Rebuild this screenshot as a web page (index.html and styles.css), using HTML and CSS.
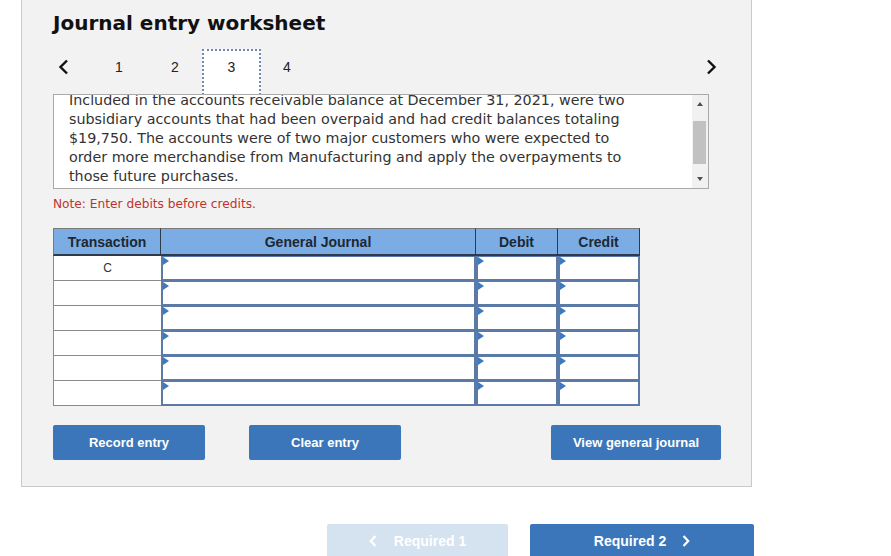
FILE: index.html
```html
<!DOCTYPE html>
<html lang="en">
<head>
<meta charset="utf-8">
<title>Journal entry worksheet</title>
<link rel="stylesheet" href="styles.css">
</head>
<body>
<div class="panel">
  <h1 class="title">Journal entry worksheet</h1>
  <div class="pager">
    <span class="arrow prev"><svg width="11" height="16" viewBox="0 0 11 16"><path d="M9 1.5 L2.5 8 L9 14.5" fill="none" stroke="#111" stroke-width="2.4"/></svg></span>
    <div class="tabs">
      <span class="tab">1</span>
      <span class="tab">2</span>
      <span class="tab active">3</span>
      <span class="tab">4</span>
    </div>
    <span class="arrow next"><svg width="11" height="16" viewBox="0 0 11 16"><path d="M2 1.5 L8.5 8 L2 14.5" fill="none" stroke="#111" stroke-width="2.4"/></svg></span>
  </div>
  <div class="scenario">
    <div class="scenario-view">
      <p class="scenario-text">Included in the accounts receivable balance at December 31, 2021, were two<br>subsidiary accounts that had been overpaid and had credit balances totaling<br>$19,750. The accounts were of two major customers who were expected to<br>order more merchandise from Manufacturing and apply the overpayments to<br>those future purchases.</p>
    </div>
    <div class="scrollbar">
      <span class="sb-up"></span>
      <span class="sb-thumb"></span>
      <span class="sb-down"></span>
    </div>
  </div>
  <p class="note">Note: Enter debits before credits.</p>
  <table class="journal">
    <colgroup><col class="c-tx"><col class="c-gj"><col class="c-amt"><col class="c-amt"></colgroup>
    <thead>
      <tr><th>Transaction</th><th>General Journal</th><th>Debit</th><th>Credit</th></tr>
    </thead>
    <tbody>
      <tr><td class="tx">C</td><td class="in"><div class="field"></div></td><td class="in"><div class="field"></div></td><td class="in"><div class="field"></div></td></tr>
      <tr><td class="tx"></td><td class="in"><div class="field"></div></td><td class="in"><div class="field"></div></td><td class="in"><div class="field"></div></td></tr>
      <tr><td class="tx"></td><td class="in"><div class="field"></div></td><td class="in"><div class="field"></div></td><td class="in"><div class="field"></div></td></tr>
      <tr><td class="tx"></td><td class="in"><div class="field"></div></td><td class="in"><div class="field"></div></td><td class="in"><div class="field"></div></td></tr>
      <tr><td class="tx"></td><td class="in"><div class="field"></div></td><td class="in"><div class="field"></div></td><td class="in"><div class="field"></div></td></tr>
      <tr><td class="tx"></td><td class="in"><div class="field"></div></td><td class="in"><div class="field"></div></td><td class="in"><div class="field"></div></td></tr>
    </tbody>
  </table>
  <div class="actions">
    <button class="btn">Record entry</button>
    <button class="btn">Clear entry</button>
    <button class="btn wide">View general journal</button>
  </div>
</div>
<div class="reqnav">
  <button class="req disabled"><svg width="8" height="12" viewBox="0 0 8 12"><path d="M6.5 1 L1.8 6 L6.5 11" fill="none" stroke="#fff" stroke-width="2.2"/></svg><span>Required 1</span></button>
  <button class="req next"><span>Required 2</span><svg width="8" height="12" viewBox="0 0 8 12"><path d="M1.5 1 L6.2 6 L1.5 11" fill="none" stroke="#fff" stroke-width="2.2"/></svg></button>
</div>
</body>
</html>
```

FILE: styles.css
```css
* { box-sizing: border-box; }
html, body { margin: 0; padding: 0; background: #fff; }
body { font-family: "Liberation Sans", Arial, sans-serif; color: #222; }

.panel {
  margin-left: 21px;
  width: 731px;
  background: #f2f2f2;
  border: 1px solid #c9c9c9;
  border-top: none;
  padding: 11px 30px 26px 31px;
}

.title {
  margin: 0;
  font-family: "DejaVu Sans", Verdana, sans-serif;
  font-weight: bold;
  font-size: 20px;
  line-height: 24px;
  color: #111;
}

.pager {
  display: flex;
  align-items: flex-start;
  height: 46px;
  margin-top: 14px;
}
.arrow { width: 20px; height: 16px; margin-top: 10px; display: flex; justify-content: center; }
.arrow svg { display: block; }
.next { margin-left: auto; }
.tabs { display: flex; margin-left: 18px; }
.tab {
  width: 56px;
  height: 46px;
  padding-top: 10px;
  font-size: 14px;
  line-height: 16px;
  text-align: center;
  color: #222;
}
.tab.active {
  background: #fff;
  border: 2px dotted #6d8bb0;
  border-bottom: none;
  padding-top: 8px;
  width: 59px;
  margin-left: -1px;
  margin-right: -2px;
}

.scenario {
  position: relative;
  margin-top: -1px;
  width: 656px;
  height: 95px;
  border: 1px solid #aaa;
  background: #fff;
  display: flex;
}
.scenario-view {
  flex: 1;
  overflow: hidden;
  padding-left: 15px;
  padding-right: 4px;
}
.scenario-text {
  margin: -4px 0 0;
  font-family: "DejaVu Sans", Verdana, sans-serif;
  font-size: 14.3px;
  line-height: 19px;
  color: #333;
  white-space: nowrap;
}
.scrollbar {
  width: 16px;
  height: 100%;
  background: #f1f1f1;
  position: relative;
}
.sb-up, .sb-down {
  position: absolute;
  left: 5px;
  width: 0; height: 0;
  border-left: 3.5px solid transparent;
  border-right: 3.5px solid transparent;
}
.sb-up { top: 7px; border-bottom: 4px solid #505050; }
.sb-down { bottom: 7px; border-top: 4px solid #505050; }
.sb-thumb {
  position: absolute;
  left: 1px; right: 2px;
  top: 26px; height: 43px;
  background: #c1c1c1;
}

.note {
  margin: 7px 0 0;
  font-family: "DejaVu Sans", Verdana, sans-serif;
  font-size: 12.2px;
  line-height: 16px;
  color: #c0322c;
}

.journal {
  margin-top: 16px;
  border-collapse: separate;
  border-spacing: 0;
  table-layout: fixed;
  width: 587px;
}
.c-tx { width: 108px; }
.c-gj { width: 315px; }
.c-amt { width: 82px; }
.journal th {
  height: 28px;
  padding: 0;
  background: #7badE4;
  font-size: 14px;
  font-weight: bold;
  color: #1d2835;
  text-align: center;
  border-top: 1px solid #7a7a7a;
  border-right: 1px solid #2e3a4c;
  border-bottom: 2px solid #2e3a4c;
}
.journal th:first-child { border-left: 1px solid #7a7a7a; }
.journal td { padding: 0; height: 25px; }
.journal td.tx {
  background: #fff;
  border-left: 1px solid #8a8a8a;
  border-bottom: 1px solid #8a8a8a;
  text-align: center;
  font-size: 12px;
  color: #333;
}
.field {
  position: relative;
  height: 25px;
  background: #fff;
  border: 2px solid #5b7aa5;
  border-top: 1px solid #5b7aa5;
}
.field::before {
  content: "";
  position: absolute;
  left: 0; top: 0;
  border-left: 6px solid #3d79c0;
  border-top: 4px solid transparent;
  border-bottom: 4px solid transparent;
}

.actions {
  display: flex;
  margin-top: 19px;
}
.btn {
  width: 152px;
  height: 35px;
  border: none;
  border-radius: 2px;
  background: #3b76ba;
  color: #fff;
  font-family: "Liberation Sans", Arial, sans-serif;
  font-size: 13px;
  font-weight: bold;
  padding: 0;
}
.btn + .btn { margin-left: 44px; }
.btn.wide { width: 170px; margin-left: auto; }

.reqnav {
  display: flex;
  margin: 37px 0 0 327px;
}
.req {
  height: 40px;
  border: none;
  border-radius: 2px 2px 0 0;
  color: #fff;
  font-family: "Liberation Sans", Arial, sans-serif;
  font-size: 14px;
  font-weight: bold;
  display: flex;
  align-items: center;
  justify-content: center;
  padding: 0 0 6px;
}
.req svg { display: block; }
.req.disabled { width: 181px; background: #d5e2f0; }
.req.disabled span { margin-left: 17px; }
.req.next { width: 224px; margin-left: 22px; background: #3b76ba; }
.req.next span { margin-right: 16px; }
```
